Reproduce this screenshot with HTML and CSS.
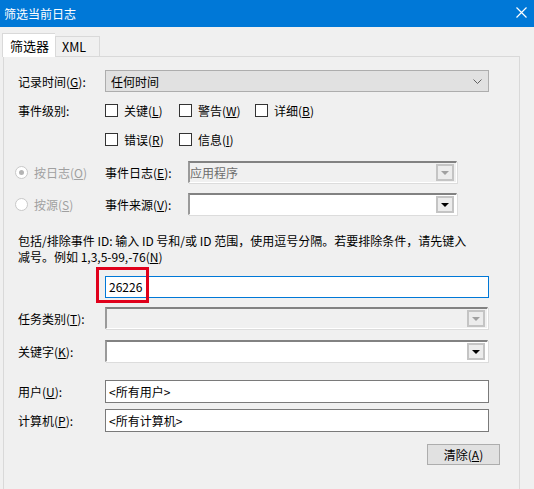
FILE: index.html
```html
<!DOCTYPE html>
<html lang="zh-CN">
<head>
  <meta charset="UTF-8">
  <title>筛选当前日志</title>
  <link rel="stylesheet" href="styles.css">
</head>
<body>
  <div class="titlebar">
    <span class="title">筛选当前日志</span>
    <svg class="close" width="11" height="11" viewBox="0 0 11 11">
      <path d="M0.5 0.5 L10.5 10.5 M10.5 0.5 L0.5 10.5" stroke="#fff" stroke-width="1.2" fill="none"/>
    </svg>
  </div>

  <div class="tabs">
    <div class="tab active">筛选器</div>
    <div class="tab">XML</div>
  </div>

  <div class="panel">
    <div class="row row-time">
      <span class="lbl">记录时间(<u>G</u>):</span>
      <div class="select">
        <span>任何时间</span>
        <svg class="chev" width="9" height="5" viewBox="0 0 9 5">
          <path d="M0.5 0.5 L4.5 4.5 L8.5 0.5" stroke="#606060" fill="none"/>
        </svg>
      </div>
    </div>

    <div class="row row-level">
      <span class="lbl">事件级别:</span>
      <div class="checks">
        <label class="check"><span class="box"></span><span>关键(<u>L</u>)</span></label>
        <label class="check"><span class="box"></span><span>警告(<u>W</u>)</span></label>
        <label class="check"><span class="box"></span><span>详细(<u>B</u>)</span></label>
        <label class="check"><span class="box"></span><span>错误(<u>R</u>)</span></label>
        <label class="check"><span class="box"></span><span>信息(<u>I</u>)</span></label>
      </div>
    </div>

    <div class="row row-log">
      <label class="radio disabled"><span class="dot checked"></span><span>按日志(<u>O</u>)</span></label>
      <span class="lbl2">事件日志(<u>E</u>):</span>
      <div class="combo short off">
        <span class="val">应用程序</span>
        <span class="drop"><span class="tri"></span></span>
      </div>
    </div>

    <div class="row row-src">
      <label class="radio disabled"><span class="dot"></span><span>按源(<u>S</u>)</span></label>
      <span class="lbl2">事件来源(<u>V</u>):</span>
      <div class="combo short">
        <span class="val"></span>
        <span class="drop"><span class="tri"></span></span>
      </div>
    </div>

    <p class="desc">包括/排除事件 ID: 输入 ID 号和/或 ID 范围，使用逗号分隔。若要排除条件，请先键入<br>减号。例如 1,3,5-99,-76(<u>N</u>)</p>

    <div class="row row-id">
      <span class="lbl"></span>
      <div class="idwrap">
        <div class="input focus">26226</div>
        <div class="mark"></div>
      </div>
    </div>

    <div class="row row-task">
      <span class="lbl">任务类别(<u>T</u>):</span>
      <div class="combo wide off">
        <span class="val"></span>
        <span class="drop"><span class="tri"></span></span>
      </div>
    </div>

    <div class="row row-key">
      <span class="lbl">关键字(<u>K</u>):</span>
      <div class="combo wide">
        <span class="val"></span>
        <span class="drop"><span class="tri"></span></span>
      </div>
    </div>

    <div class="row row-user">
      <span class="lbl">用户(<u>U</u>):</span>
      <div class="input">&lt;所有用户&gt;</div>
    </div>

    <div class="row row-pc">
      <span class="lbl">计算机(<u>P</u>):</span>
      <div class="input">&lt;所有计算机&gt;</div>
    </div>

    <div class="actions">
      <button class="btn">清除(<u>A</u>)</button>
    </div>
  </div>
</body>
</html>
```

FILE: styles.css
```css
body {
  margin: 0;
  width: 534px;
  height: 489px;
  overflow: hidden;
  background: #f0f0f0;
  color: #000;
  font-family: "Microsoft YaHei UI", "Noto Sans CJK SC", sans-serif;
  font-size: 12px;
}
u {
  text-decoration: underline;
  text-underline-offset: 1px;
}
.titlebar {
  height: 27px;
  background: #0078d7;
  color: #fff;
  display: flex;
  align-items: center;
  justify-content: space-between;
  padding: 0 7px 0 4px;
}
.title {
  line-height: 27px;
}
.close {
  display: block;
  margin-top: -2px;
}
.tabs {
  display: flex;
  align-items: flex-end;
  height: 23px;
  margin-top: 6px;
  padding-left: 2px;
}
.tab {
  height: 20px;
  line-height: 19px;
  padding: 0 8px 0 6px;
  border: 1px solid #d9d9d9;
  border-bottom: none;
  box-sizing: border-box;
  font-size: 12.5px;
}
.tab.active {
  height: 24px;
  line-height: 23px;
  margin-bottom: -1px;
  padding: 0 6px 0 7px;
  background: #fff;
  border-right: none;
  position: relative;
  z-index: 1;
  font-size: 13px;
}
.tab + .tab {
  width: 45px;
  padding: 0 0 0 6px;
}
.panel {
  margin-left: 3px;
  width: 517px;
  height: 440px;
  box-sizing: border-box;
  border: 1px solid #d9d9d9;
  padding: 13px 0 0 14px;
}
.row {
  display: flex;
  align-items: center;
}
.lbl {
  width: 87px;
  flex: none;
}
.select {
  width: 384px;
  height: 22px;
  box-sizing: border-box;
  background: #e1e1e1;
  border: 1px solid #adadad;
  display: flex;
  align-items: center;
  justify-content: space-between;
  padding: 0 6px 0 5px;
}
.row-level {
  align-items: flex-start;
  margin-top: 10px;
}
.row-level .lbl {
  line-height: 17px;
}
.checks {
  display: grid;
  grid-template-columns: 74px 76px auto;
  row-gap: 12px;
}
.check {
  display: flex;
  align-items: center;
  gap: 6px;
  height: 17px;
}
.box {
  width: 13px;
  height: 13px;
  box-sizing: border-box;
  border: 1px solid #333;
  background: #fff;
}
.row-log {
  margin-top: 13px;
}
.row-src {
  margin-top: 10px;
}
.radio {
  display: flex;
  align-items: center;
  gap: 6px;
  width: 87px;
  margin-left: -3px;
  margin-right: 3px;
}
.radio.disabled {
  color: #a0a0a0;
}
.dot {
  width: 13px;
  height: 13px;
  box-sizing: border-box;
  border: 1px solid #c8c8c8;
  border-radius: 50%;
  background: #fff;
  display: flex;
  align-items: center;
  justify-content: center;
}
.dot.checked::after {
  content: "";
  width: 5px;
  height: 5px;
  border-radius: 50%;
  background: #b4b4b4;
}
.lbl2 {
  width: 83px;
  flex: none;
}
.combo {
  height: 22px;
  box-sizing: border-box;
  background: #fff;
  border-top: 2px solid #828282;
  border-left: 2px solid #9a9a9a;
  border-right: 1px solid #fff;
  border-bottom: 1px solid #fff;
  box-shadow: 1px 1px 0 #dcdcdc;
  display: flex;
  align-items: center;
  justify-content: space-between;
  padding: 0 2px 0 0;
}
.combo.off {
  background: #f0f0f0;
}
.combo.off .val {
  color: #6d6d6d;
}
.combo.short {
  width: 269px;
}
.combo.wide {
  width: 383px;
}
.val {
  line-height: 18px;
}
.drop {
  width: 18px;
  height: 17px;
  box-sizing: border-box;
  border: 2px solid #c4c4c4;
  background: #ececec;
  display: flex;
  align-items: center;
  justify-content: center;
}
.tri {
  width: 0;
  height: 0;
  border-left: 4px solid transparent;
  border-right: 4px solid transparent;
  border-top: 4px solid #000;
}
.off .tri {
  border-top-color: #a0a0a0;
}
.desc {
  margin: 18px 0 0;
  line-height: 16px;
  white-space: nowrap;
}
.row-id {
  margin-top: 11px;
}
.idwrap {
  position: relative;
}
.input {
  width: 384px;
  height: 23px;
  box-sizing: border-box;
  background: #fff;
  border: 1px solid #7a7a7a;
  line-height: 21px;
  padding-left: 3px;
}
.input.focus {
  height: 22px;
  line-height: 20px;
  border-color: #0078d7;
}
.mark {
  position: absolute;
  left: -9px;
  top: -9px;
  width: 53px;
  height: 36px;
  box-sizing: border-box;
  border: 3px solid #e0001b;
}
.row-task {
  margin-top: 9px;
}
.row-key {
  margin-top: 11px;
}
.row-user {
  margin-top: 18px;
}
.row-pc {
  margin-top: 6px;
}
.actions {
  display: flex;
  justify-content: flex-end;
  width: 482px;
  margin-top: 12px;
}
.btn {
  width: 73px;
  height: 21px;
  background: #e1e1e1;
  border: 1px solid #adadad;
  font-family: inherit;
  font-size: 12px;
  padding: 0;
  color: #000;
}
```
